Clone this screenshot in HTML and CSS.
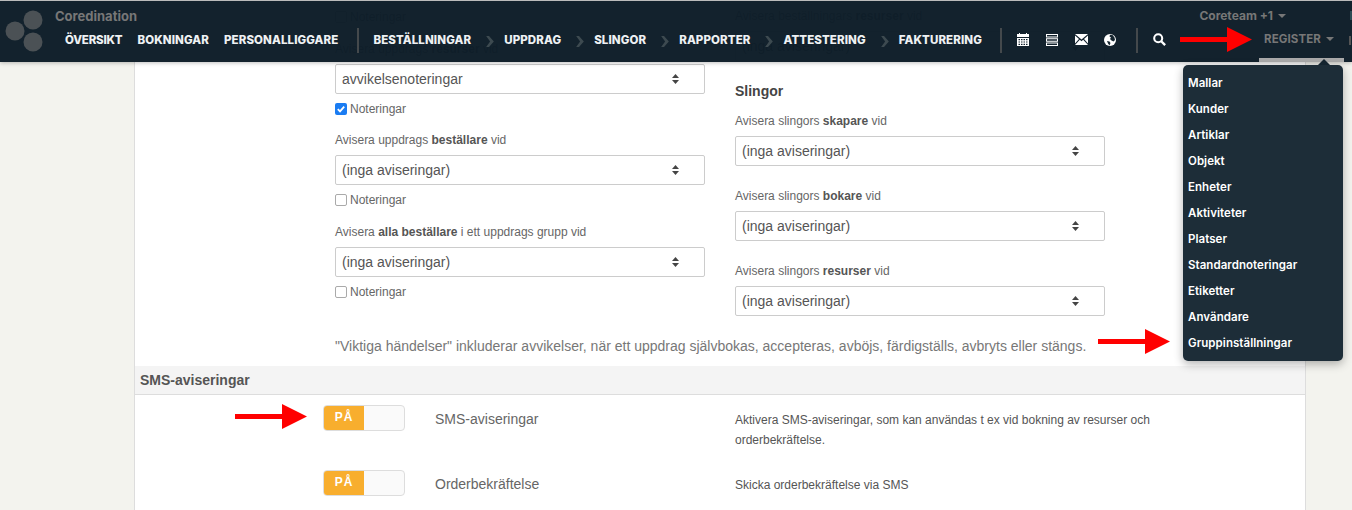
FILE: index.html
```html
<!DOCTYPE html>
<html lang="sv">
<head>
<meta charset="utf-8">
<title>Coredination</title>
<link rel="stylesheet" href="styles.css">
</head>
<body>
<main class="card">
  <div class="columns">
    <div class="col col-left">
      <div class="check"><span class="box"></span>Noteringar</div>
      <div class="group">
        <div class="label">Avisera uppdrags <b>resurser</b> vid</div>
        <div class="select"><span>avvikelsenoteringar</span><svg class="updown" viewBox="0 0 7 10"><path d="M3.5 0 7 4H0zM3.5 10 0 6h7z"/></svg></div>
        <div class="check"><span class="box on"><svg viewBox="0 0 12 12"><path d="M2.8 6.2 5 8.4 9.2 3.6" fill="none" stroke="#fff" stroke-width="1.8"/></svg></span>Noteringar</div>
      </div>
      <div class="group group-tight">
        <div class="label">Avisera uppdrags <b>beställare</b> vid</div>
        <div class="select"><span>(inga aviseringar)</span><svg class="updown" viewBox="0 0 7 10"><path d="M3.5 0 7 4H0zM3.5 10 0 6h7z"/></svg></div>
        <div class="check"><span class="box"></span>Noteringar</div>
      </div>
      <div class="group">
        <div class="label">Avisera <b>alla beställare</b> i ett uppdrags grupp vid</div>
        <div class="select"><span>(inga aviseringar)</span><svg class="updown" viewBox="0 0 7 10"><path d="M3.5 0 7 4H0zM3.5 10 0 6h7z"/></svg></div>
        <div class="check"><span class="box"></span>Noteringar</div>
      </div>
    </div>
    <div class="col col-right">
      <div class="rgroup">
        <div class="label">Avisera beställningars <b>resurser</b> vid</div>
        <div class="select"><span>(inga aviseringar)</span><svg class="updown" viewBox="0 0 7 10"><path d="M3.5 0 7 4H0zM3.5 10 0 6h7z"/></svg></div>
      </div>
      <h3 class="heading">Slingor</h3>
      <div class="rgroup">
        <div class="label">Avisera slingors <b>skapare</b> vid</div>
        <div class="select"><span>(inga aviseringar)</span><svg class="updown" viewBox="0 0 7 10"><path d="M3.5 0 7 4H0zM3.5 10 0 6h7z"/></svg></div>
      </div>
      <div class="rgroup">
        <div class="label">Avisera slingors <b>bokare</b> vid</div>
        <div class="select"><span>(inga aviseringar)</span><svg class="updown" viewBox="0 0 7 10"><path d="M3.5 0 7 4H0zM3.5 10 0 6h7z"/></svg></div>
      </div>
      <div class="rgroup">
        <div class="label">Avisera slingors <b>resurser</b> vid</div>
        <div class="select"><span>(inga aviseringar)</span><svg class="updown" viewBox="0 0 7 10"><path d="M3.5 0 7 4H0zM3.5 10 0 6h7z"/></svg></div>
      </div>
    </div>
  </div>
  <p class="note">"Viktiga händelser" inkluderar avvikelser, när ett uppdrag självbokas, accepteras, avböjs, färdigställs, avbryts eller stängs.</p>
  <h2 class="section">SMS-aviseringar</h2>
  <div class="row">
    <div class="toggle"><span class="toggle-on">PÅ</span></div>
    <div class="row-label">SMS-aviseringar</div>
    <div class="row-desc">Aktivera SMS-aviseringar, som kan användas t ex vid bokning av resurser och orderbekräftelse.</div>
  </div>
  <div class="row">
    <div class="toggle"><span class="toggle-on">PÅ</span></div>
    <div class="row-label">Orderbekräftelse</div>
    <div class="row-desc">Skicka orderbekräftelse via SMS</div>
  </div>
</main>

<header class="topbar">
  <svg class="logo" viewBox="0 0 55 61"><circle cx="33" cy="19" r="9.5"/><circle cx="15" cy="30" r="9.5"/><circle cx="33" cy="41" r="9.5"/></svg>
  <div class="bar-main">
    <div class="bar-top">
      <span class="brand">Coredination</span>
      <span class="team">Coreteam +1<i class="caret"></i></span>
      <span class="cut"></span>
    </div>
    <nav class="nav">
      <a class="item item-first">ÖVERSIKT</a>
      <a class="item">BOKNINGAR</a>
      <a class="item">PERSONALLIGGARE</a>
      <span class="sep sep-a"></span>
      <a class="item">BESTÄLLNINGAR</a>
      <svg class="chev" viewBox="0 0 7 10"><path d="M0 0h2.6L7 5 2.6 10H0l3.6-5z"/></svg>
      <a class="item">UPPDRAG</a>
      <svg class="chev" viewBox="0 0 7 10"><path d="M0 0h2.6L7 5 2.6 10H0l3.6-5z"/></svg>
      <a class="item">SLINGOR</a>
      <svg class="chev" viewBox="0 0 7 10"><path d="M0 0h2.6L7 5 2.6 10H0l3.6-5z"/></svg>
      <a class="item">RAPPORTER</a>
      <svg class="chev" viewBox="0 0 7 10"><path d="M0 0h2.6L7 5 2.6 10H0l3.6-5z"/></svg>
      <a class="item">ATTESTERING</a>
      <svg class="chev" viewBox="0 0 7 10"><path d="M0 0h2.6L7 5 2.6 10H0l3.6-5z"/></svg>
      <a class="item">FAKTURERING</a>
      <span class="sep sep-b"></span>
      <svg class="ic" viewBox="0 0 12 13"><path fill="#fff" d="M2 0h1v1h6V0h1v1h2v3H0V1h2z"/><path fill="#fff" d="M0 5h12v8H0zm1.5 1v1.200h1.500V6zm2.500 0v1.200h1.500V6zm2.500 0v1.200h1.500V6zm2.500 0v1.200h1.500V6zM1.500 8.400v1.200h1.500V8.400zm2.500 0v1.200h1.500V8.400zm2.500 0v1.200h1.500V8.400zm2.500 0v1.200h1.500V8.400zM1.500 10.800V12h1.500v-1.200zm2.500 0V12h1.500v-1.200zm2.500 0V12h1.500v-1.200zm2.500 0V12h1.500v-1.200z" fill-rule="evenodd"/></svg>
      <svg class="ic ic-list" viewBox="0 0 12 12"><path fill="#fff" fill-rule="evenodd" d="M0 0h12v3.400H0zm1 1v1.400h10V1zM0 4.300h12v3.400H0zm1 1v1.400h10V5.300zM0 8.600h12V12H0zm1 1v1.400h10V9.600z"/></svg>
      <svg class="ic ic-mail" viewBox="0 0 13 11"><path fill="#fff" d="M0 0h13L6.500 5.600zM0 1.500 4 5 0 9.500zM13 1.500 9 5l4 4.500zM4.800 5.700l1.700 1.500 1.700-1.500L13 11H0z"/></svg>
      <svg class="ic ic-globe" viewBox="0 0 12 12"><circle cx="6" cy="6" r="6" fill="#fff"/><path fill="#15252f" d="M6 0.800 8.500 1 10.500 3.500 11 6 9.500 7.500 7.500 6.500 6 5 7 3.500 5.500 2.500zM3 7l2.500.5 1 1.500L5.500 11.500 4 9.500z"/></svg>
      <span class="sep sep-c"></span>
      <svg class="ic ic-search" viewBox="0 0 12 12"><circle cx="4.800" cy="4.800" r="3.700" fill="none" stroke="#fff" stroke-width="1.900"/><path d="M7.600 7.600 11.200 11.200" stroke="#fff" stroke-width="2.200" fill="none"/></svg>
      <a class="item register">REGISTER<i class="caret"></i></a>
      <span class="cut cut-nav"></span>
    </nav>
  </div>
</header>

<div class="menu">
  <a>Mallar</a><a>Kunder</a><a>Artiklar</a><a>Objekt</a><a>Enheter</a><a>Aktiviteter</a><a>Platser</a><a>Standardnoteringar</a><a>Etiketter</a><a>Användare</a><a>Gruppinställningar</a>
</div>

<svg class="arrow arrow-top" viewBox="0 0 72 25"><path d="M0 10h47V0l25 12.500L47 25V15H0z"/></svg>
<svg class="arrow arrow-mid" viewBox="0 0 72 25"><path d="M0 10h47V0l25 12.500L47 25V15H0z"/></svg>
<svg class="arrow arrow-sms" viewBox="0 0 72 25"><path d="M0 10h47V0l25 12.500L47 25V15H0z"/></svg>
</body>
</html>
```

FILE: styles.css
```css
* { box-sizing: border-box; }
html, body { margin: 0; height: 510px; overflow: hidden; }
body {
  position: relative;
  background: #f3f3ee;
  font-family: "Liberation Sans", Arial, sans-serif;
  color: #666;
}

/* page card */
.card {
  margin-left: 134px;
  width: 1172px;
  height: 510px;
  background: #fff;
  border-left: 1px solid #ddd;
  border-right: 1px solid #ddd;
}
.columns { display: flex; gap: 30px; padding-left: 200px; }
.col { width: 370px; }
.col-left { padding-top: 9px; }
.col-right { padding-top: 7px; }

.label { height: 16px; line-height: 18px; font-size: 12px; color: #666; }
.label b { color: #555; }
.select {
  display: flex;
  align-items: center;
  justify-content: space-between;
  height: 30px;
  padding: 0 25px 0 6px;
  border: 1px solid #ccc;
  border-radius: 2px;
  background: #fff;
  font-size: 14px;
  color: #555;
}
.updown { width: 7px; height: 10px; fill: #444; }
.check {
  display: flex;
  align-items: center;
  gap: 3px;
  height: 16px;
  line-height: 16px;
  font-size: 12px;
  color: #666;
}
.box {
  display: block;
  width: 12px;
  height: 12px;
  border: 1px solid #aaa;
  border-radius: 2px;
  background: #fff;
}
.box svg { display: block; width: 12px; height: 12px; }
.box.on { background: #1a7cf2; border: 0; }

.group { margin-top: 15px; }
.group-tight { margin-top: 14px; }
.group .label { margin-bottom: 8px; }
.group .check { margin-top: 7px; }

.rgroup { margin-bottom: 21px; }
.rgroup .label { margin-bottom: 8px; }
.rgroup:last-child { margin-bottom: 0; }
.rgroup:first-child { margin-bottom: 22px; }
.heading {
  margin: 0 0 13px;
  height: 16px;
  line-height: 16px;
  font-size: 14px;
  font-weight: bold;
  color: #444;
}

.note {
  margin: 22px 0 12px 200px;
  height: 16px;
  line-height: 16px;
  font-size: 14px;
  color: #777;
  white-space: nowrap;
}
.section {
  margin: 0;
  height: 29px;
  padding-left: 5px;
  background: #f4f4f4;
  border-bottom: 1px solid #ddd;
  line-height: 28px;
  font-size: 14px;
  font-weight: bold;
  color: #555;
}
.row {
  display: flex;
  align-items: flex-start;
  height: 65px;
  padding-left: 188px;
}
.section + .row { margin-top: 10px; }
.toggle {
  width: 82px;
  height: 26px;
  border: 1px solid #ddd;
  border-radius: 4px;
  background: #fafafa;
  overflow: hidden;
}
.toggle-on {
  display: block;
  width: 40px;
  height: 24px;
  background: #f8ae2e;
  color: #fff;
  text-align: center;
  font-size: 12px;
  font-weight: bold;
  letter-spacing: 1px;
  line-height: 22px;
}
.row-label {
  width: 300px;
  margin-left: 30px;
  padding-top: 1px;
  line-height: 26px;
  font-size: 14px;
  color: #666;
}
.row-desc {
  width: 430px;
  padding-top: 5px;
  font-size: 12px;
  line-height: 20px;
  color: #555;
}

/* top bar, fixed over the scrolled page */
.topbar {
  position: absolute;
  top: 0;
  left: 0;
  right: 0;
  height: 62px;
  display: flex;
  border-top: 1px solid #bbb;
  background: rgba(13, 29, 40, 0.975);
  box-shadow: 0 1px 4px rgba(0, 0, 0, 0.25);
  font-family: Inter, "Liberation Sans", sans-serif;
  overflow: hidden;
}
.logo { flex: none; width: 55px; height: 61px; fill: #4b5155; }
.bar-main { flex: 1; min-width: 0; }
.bar-top {
  display: flex;
  align-items: center;
  height: 29px;
}
.brand { font-size: 13px; font-weight: 700; color: #777; }
.team {
  margin-left: auto;
  margin-right: 64px;
  font-size: 12px;
  font-weight: 700;
  color: #777;
  white-space: nowrap;
}
.cut { width: 2px; height: 9px; background: #2d4c55; }
.caret {
  display: inline-block;
  margin-left: 5px;
  vertical-align: 2px;
  border-left: 4px solid transparent;
  border-right: 4px solid transparent;
  border-top: 4px solid #777;
}
.nav {
  display: flex;
  align-items: center;
  height: 20px;
  padding-left: 10px;
}
.item {
  font-size: 11.5px;
  font-weight: 800;
  letter-spacing: 0.1px;
  color: #eef1f3;
  white-space: nowrap;
  margin-right: 15px;
}
.item-first { letter-spacing: -0.2px; }
.sep { flex: none; width: 2px; height: 25px; background: #44494c; }
.sep-a { margin: 0 14px 0 4px; }
.sep-b { margin: 0 15px 0 3px; }
.sep-c { margin: 0 15px 0 20px; }
.chev { flex: none; width: 8px; height: 11px; fill: #3d4a50; margin: 2px 10px 0 0; }
.ic { flex: none; width: 12px; height: 13px; margin: 0 17px 1px 0; }
.ic-list { height: 12px; }
.ic-mail { width: 13px; height: 11px; margin-right: 16px; }
.ic-globe { height: 12px; margin-right: 0; }
.ic-search { width: 13px; margin-right: 0; }
.register {
  flex: none;
  align-self: flex-start;
  width: 85px;
  height: 32px;
  margin: 0 0 0 93px;
  padding-left: 5px;
  border-bottom: 4px solid #aaa;
  font-weight: 700;
  color: #777;
  line-height: 18px;
}
.cut-nav { flex: none; margin-left: 5px; background: #555; }

/* dropdown */
.menu {
  position: absolute;
  left: 1183px;
  top: 65px;
  width: 160px;
  height: 296px;
  padding: 5px;
  border-radius: 5px;
  background: rgba(25, 42, 53, 0.985);
  box-shadow: 0 3px 10px rgba(0, 0, 0, 0.3);
  font-family: Inter, "Liberation Sans", sans-serif;
}
.menu::before {
  content: "";
  position: absolute;
  top: -6px;
  left: 135px;
  border-left: 6px solid transparent;
  border-right: 6px solid transparent;
  border-bottom: 6px solid #14242f;
}
.menu a {
  display: block;
  height: 26px;
  line-height: 27px;
  font-size: 11.5px;
  font-weight: 600;
  letter-spacing: 0.05px;
  color: #fff;
}

/* red annotation arrows */
.arrow { position: absolute; width: 72px; height: 25px; fill: #f00; }
.arrow-top { left: 1180px; top: 27px; }
.arrow-mid { left: 1098px; top: 329px; }
.arrow-sms { left: 235px; top: 404px; }
```
